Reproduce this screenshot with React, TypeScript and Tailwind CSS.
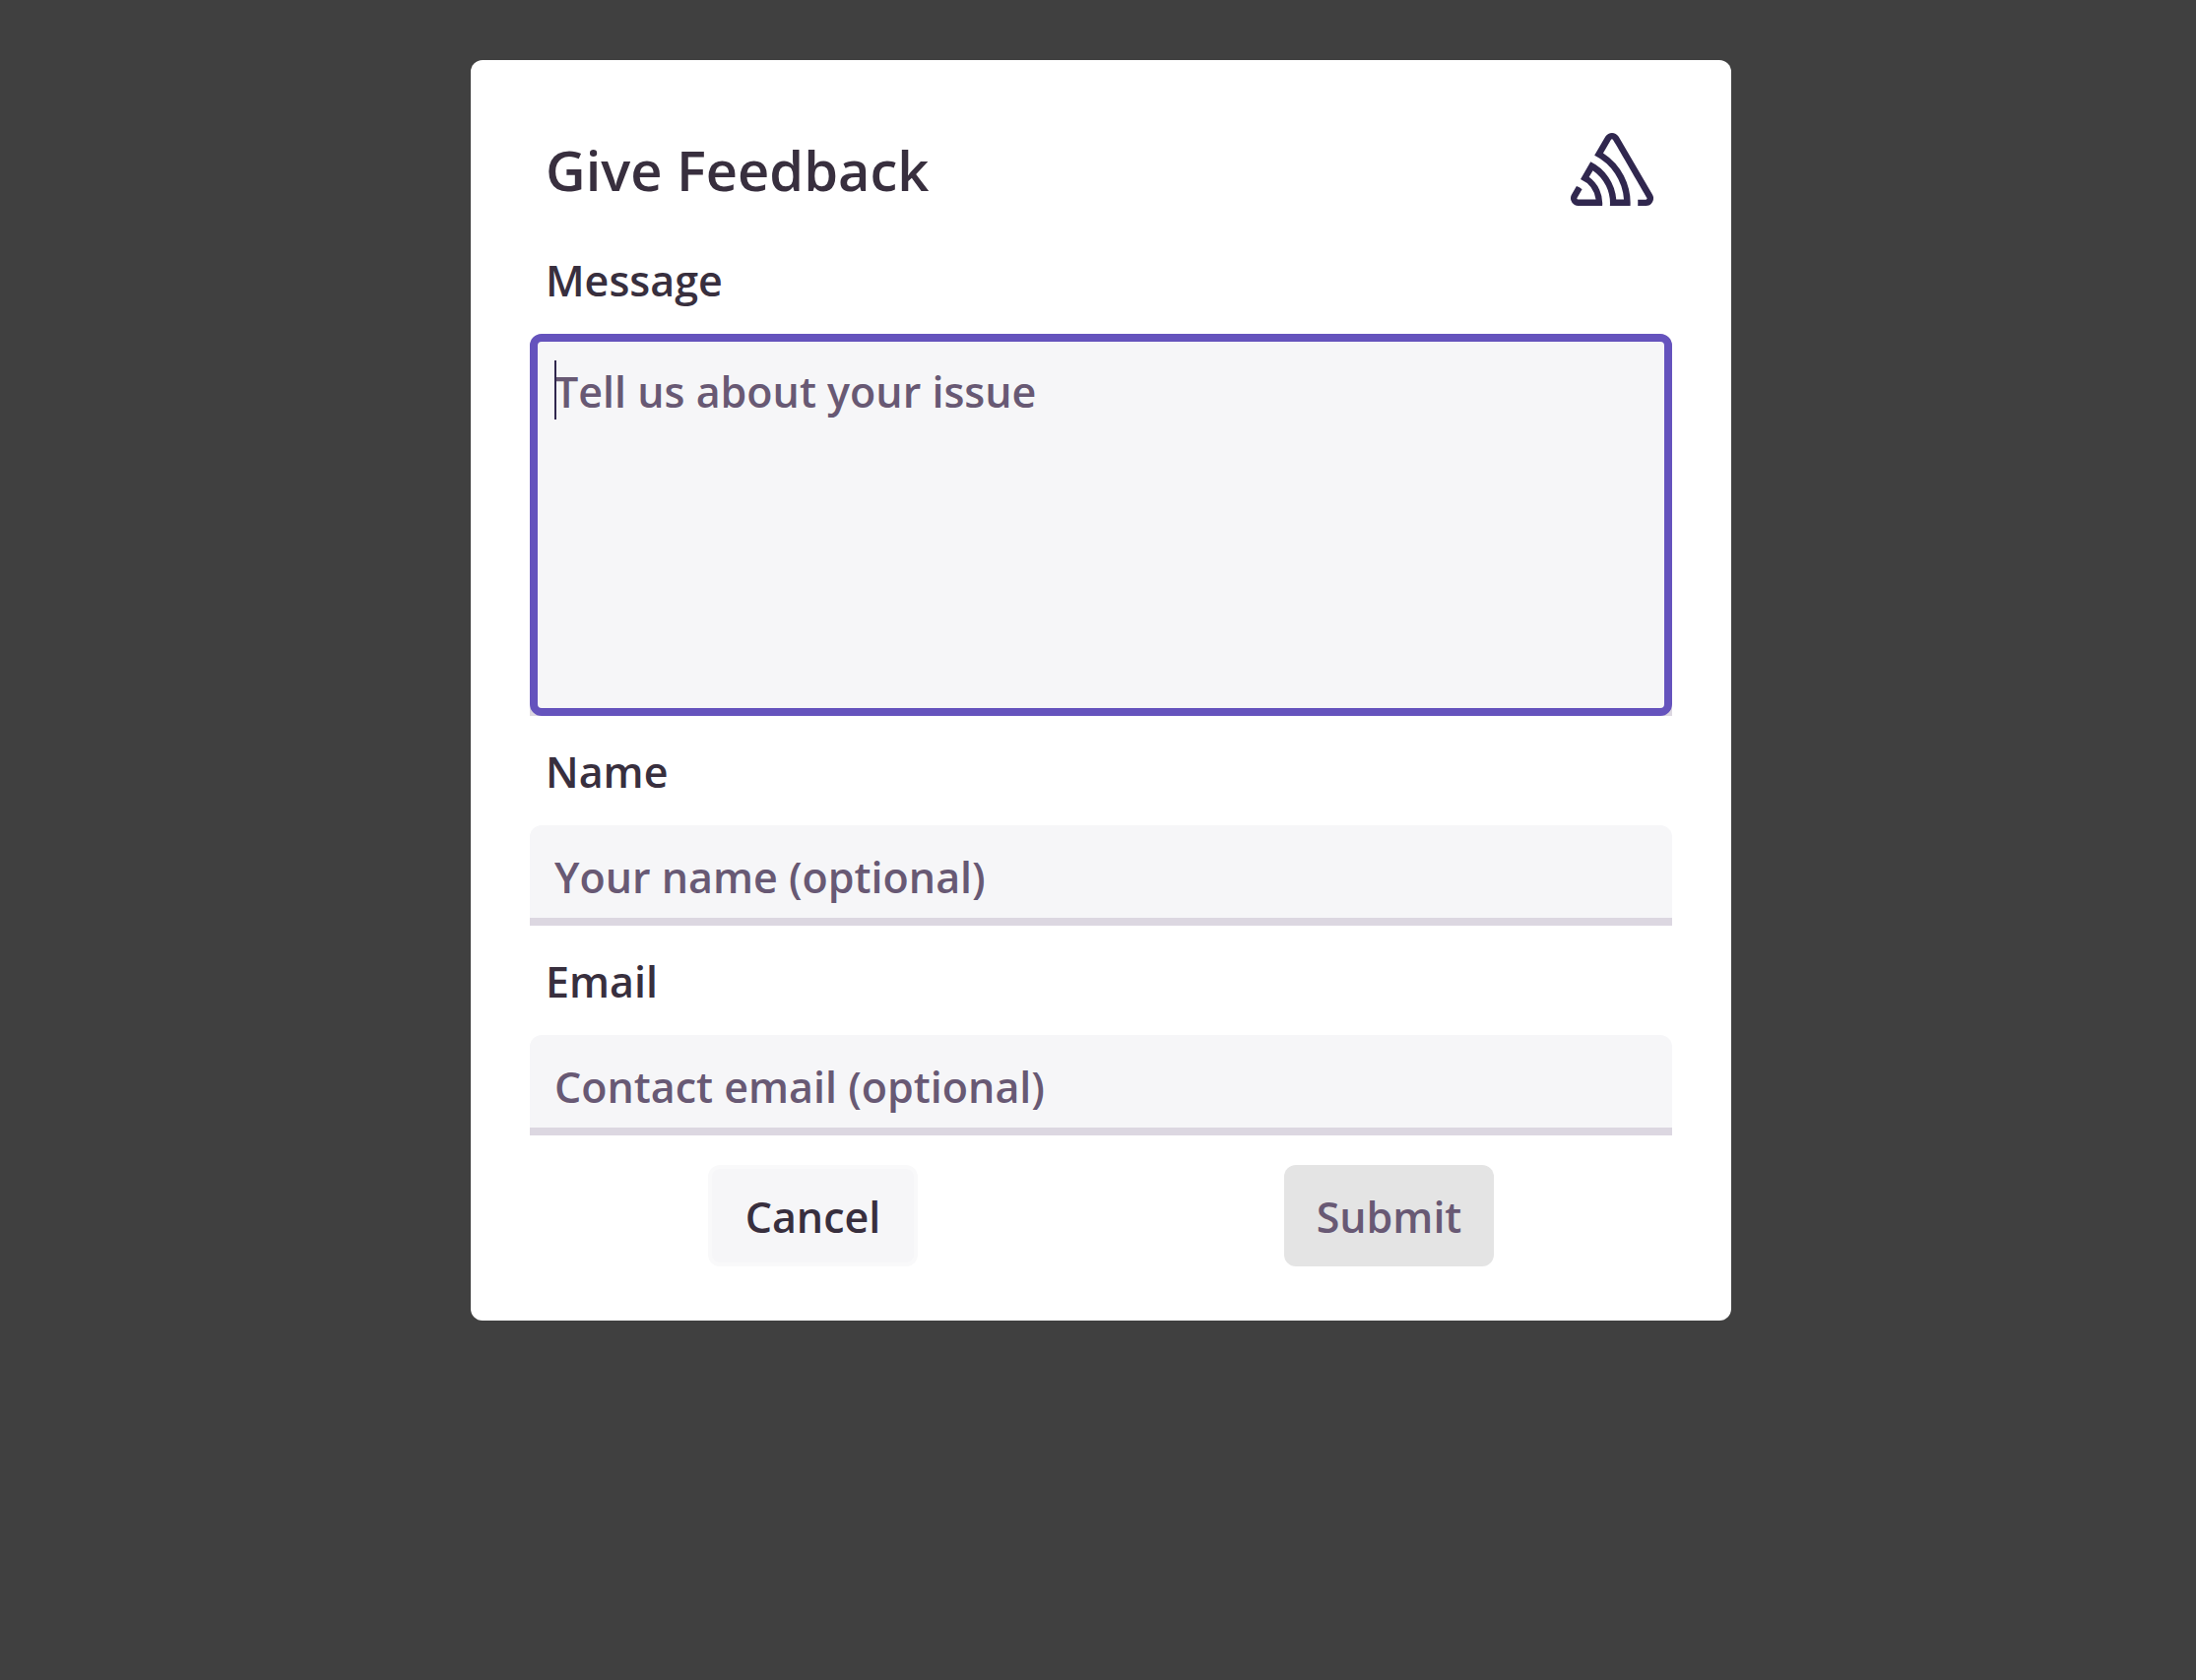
import React from "react";

function SentryMark() {
  return (
    <svg viewBox="0 0 24 24" className="h-[84px] w-[84px] fill-[#30274e]" role="img" aria-label="Sentry">
      <path d="M13.91 2.505c-.873-1.448-2.972-1.448-3.844 0L6.904 7.92a15.478 15.478 0 0 1 8.53 12.811h-2.221A13.301 13.301 0 0 0 5.784 9.814l-2.926 5.06a7.65 7.65 0 0 1 4.435 5.848H2.194a.365.365 0 0 1-.298-.534l1.413-2.402a5.16 5.16 0 0 0-1.614-.913L.296 19.275a2.182 2.182 0 0 0 .812 2.999 2.24 2.24 0 0 0 1.086.288h6.983a9.322 9.322 0 0 0-3.845-8.318l1.11-1.922a11.47 11.47 0 0 1 4.95 10.24h5.915a17.242 17.242 0 0 0-7.885-15.28l2.244-3.845a.37.37 0 0 1 .504-.13c.255.14 9.75 16.708 9.928 16.9a.365.365 0 0 1-.327.543h-2.287c.029.612.029 1.223 0 1.831h2.297a2.206 2.206 0 0 0 1.922-3.31z" />
    </svg>
  );
}

type FieldProps = { id: string; label: string; placeholder: string; type: string };

function Field({ id, label, placeholder, type }: FieldProps) {
  return (
    <div className="flex flex-col">
      <label htmlFor={id} className="px-4 pt-[27px] pb-6 leading-[60px]">
        {label}
      </label>
      <input
        id={id}
        type={type}
        placeholder={placeholder}
        className="h-[102px] w-full rounded-t-xl border-b-8 border-[#dcd7e1] bg-[#f6f6f8] px-[25px] pt-2.5 outline-none placeholder:text-[#685974] placeholder:opacity-100"
      />
    </div>
  );
}

export default function App() {
  return (
    <main className="min-h-screen bg-[#404040] px-4 pt-[61px] pb-16 pl-[22px] font-['Open_Sans',sans-serif] text-[43px] font-semibold text-[#382f3e]">
      <form
        className="mx-auto flex w-full max-w-[1280px] flex-col rounded-xl bg-white px-[60px] pt-[69px] pb-[55px]"
        onSubmit={(e) => e.preventDefault()}
      >
        <header className="flex items-center justify-between pr-[19px] pl-4">
          <h1 className="text-[56px] leading-[84px]">Give Feedback</h1>
          <SentryMark />
        </header>
        <label htmlFor="message" className="px-4 pt-[41px] pb-6 leading-[60px]">
          Message
        </label>
        <div className="relative flex rounded-t-xl bg-[#dcd7e1]">
          <textarea
            id="message"
            placeholder="Tell us about your issue"
            className="h-[388px] w-full resize-none rounded-xl border-8 border-[#6553bd] bg-[#f6f6f8] px-[17px] py-[21px] leading-[60px] caret-transparent outline-none placeholder:text-[#685974] placeholder:opacity-100"
          />
          <span className="absolute top-[27px] left-[25px] h-[60px] w-0.5 bg-[#30274e]" />
        </div>
        <Field id="name" label="Name" placeholder="Your name (optional)" type="text" />
        <Field id="email" label="Email" placeholder="Contact email (optional)" type="email" />
        <div className="mt-[30px] grid grid-cols-2 justify-items-center gap-2.5">
          <button
            type="button"
            className="h-[103px] w-[213px] rounded-xl border-4 border-[#f9f9fa] bg-[#f6f6f8] pt-1"
          >
            Cancel
          </button>
          <button
            type="submit"
            disabled
            className="h-[103px] w-[213px] rounded-xl bg-[#e4e4e4] pt-1 text-[#685974]"
          >
            Submit
          </button>
        </div>
      </form>
    </main>
  );
}
